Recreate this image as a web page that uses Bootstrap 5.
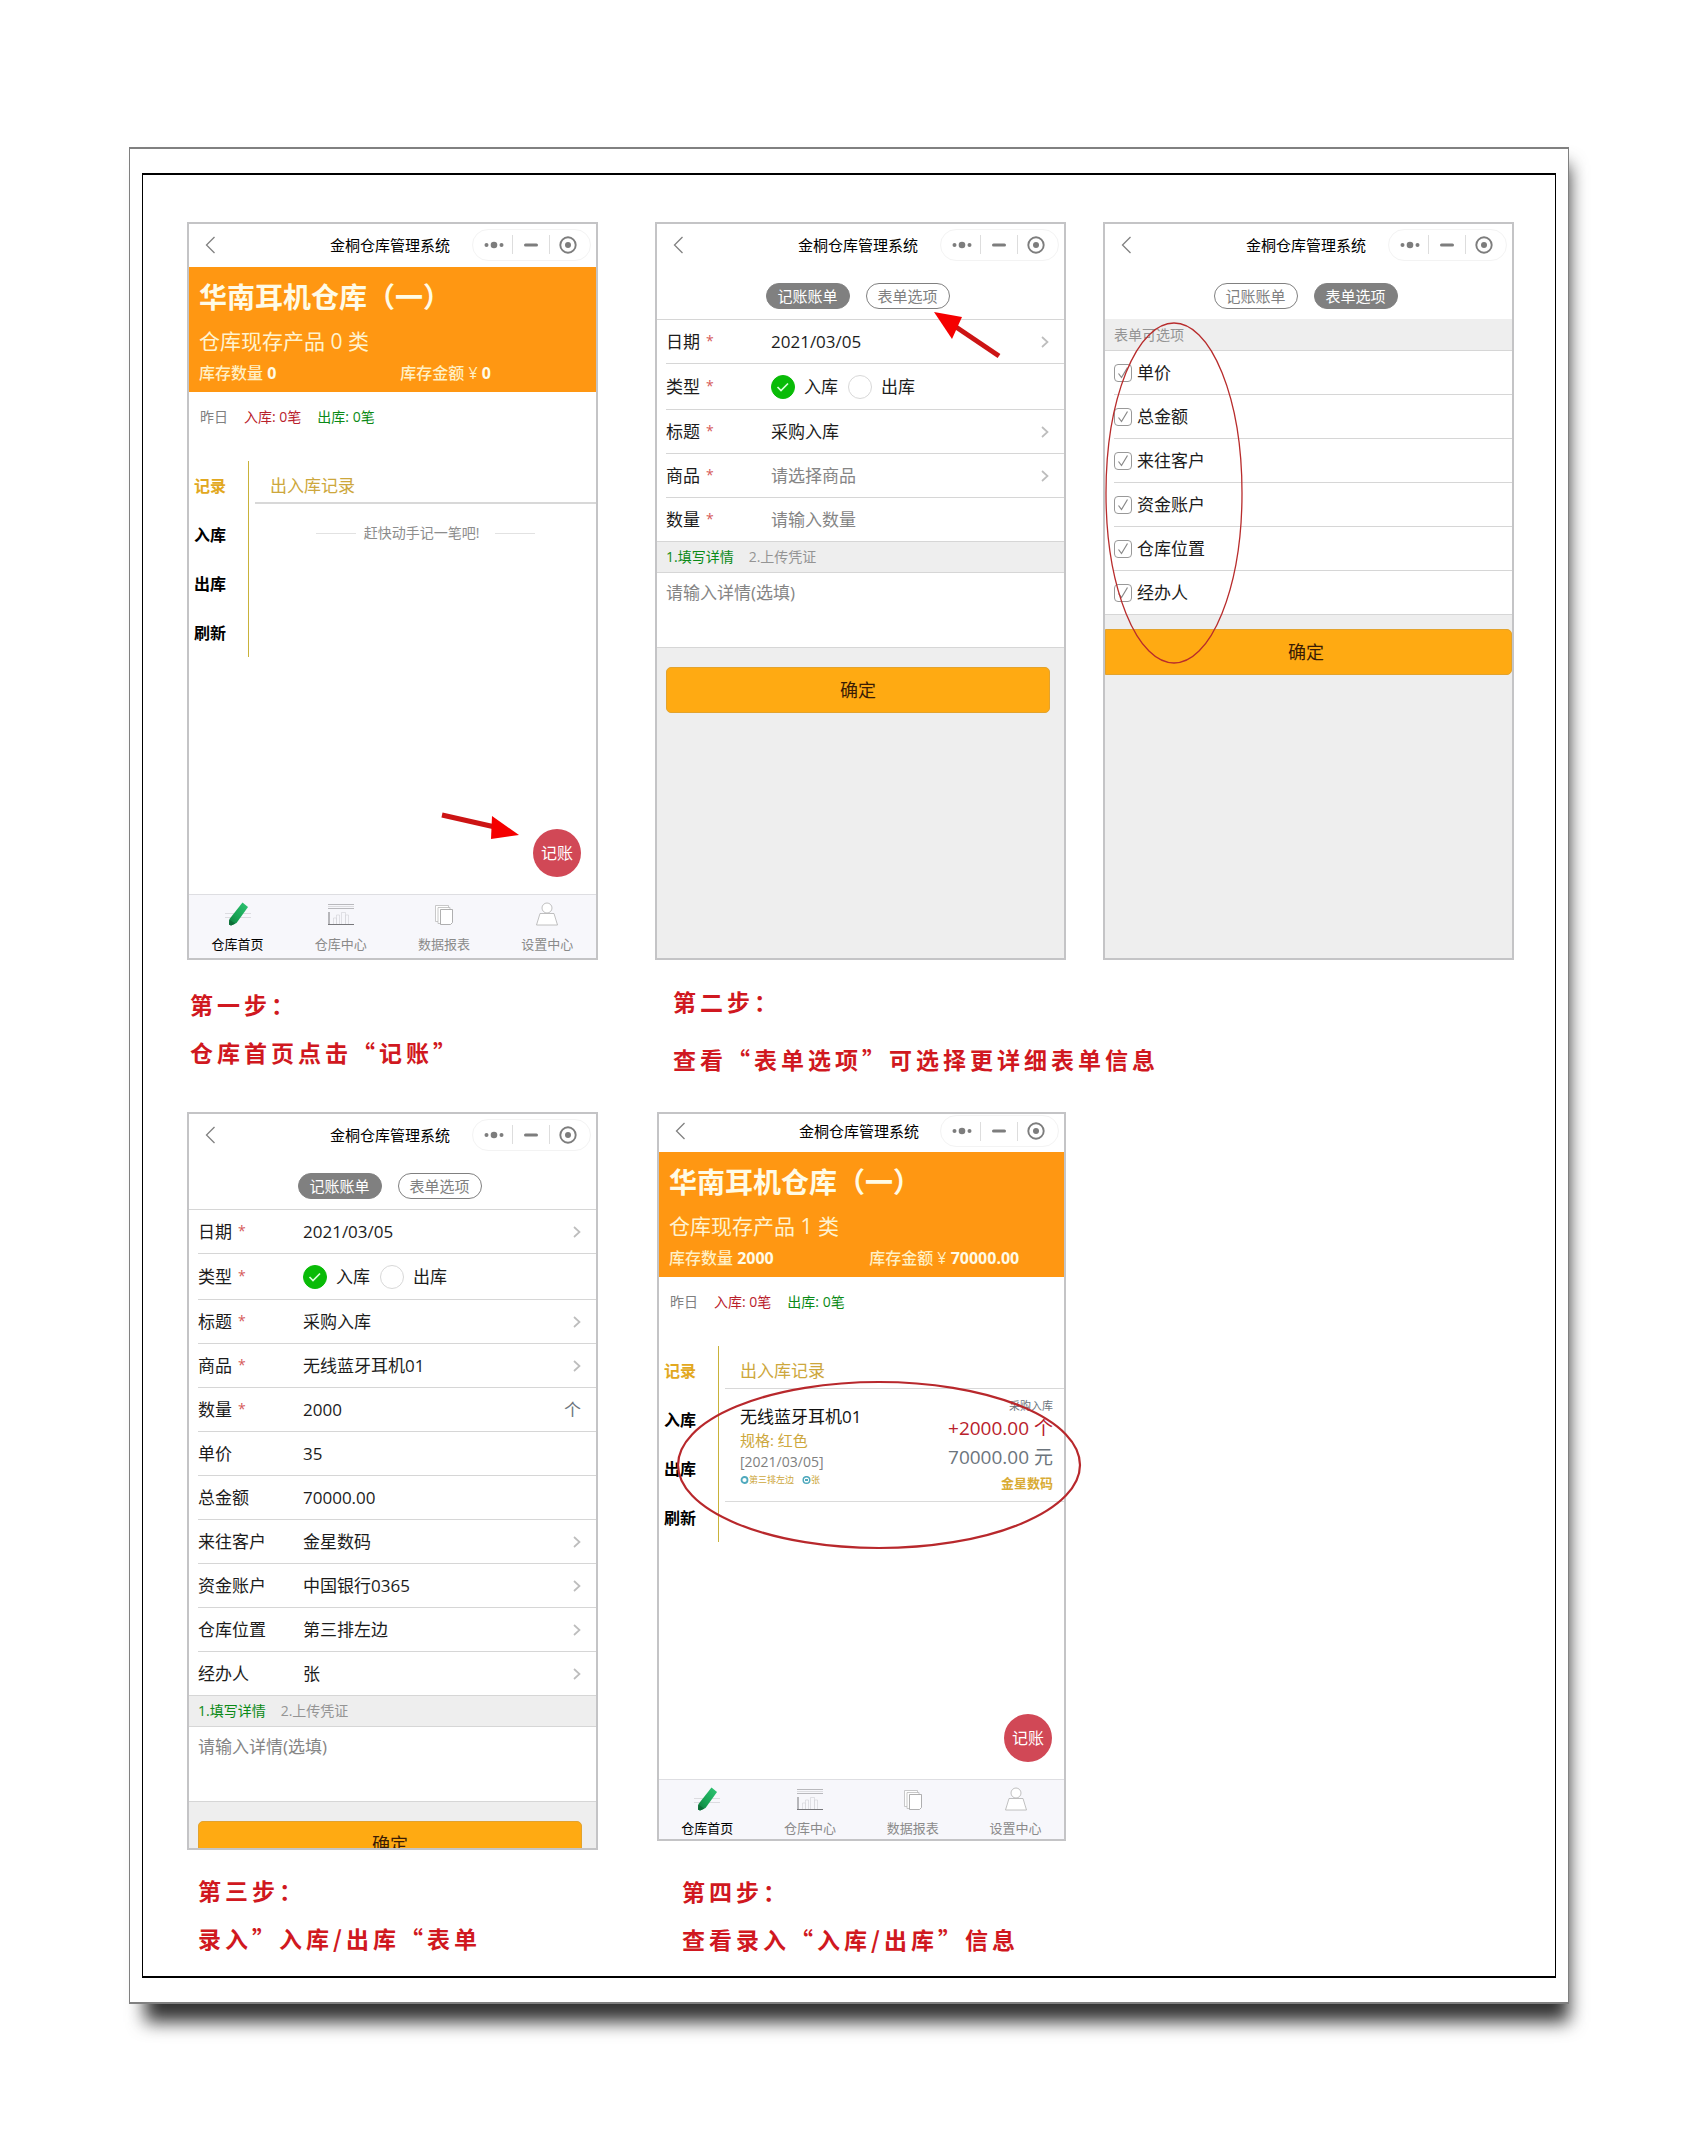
<!DOCTYPE html>
<html lang="zh-CN">
<head>
<meta charset="utf-8">
<meta name="viewport" content="width=device-width, initial-scale=1">
<title>金桐仓库管理系统</title>
<link href="https://cdn.jsdelivr.net/npm/bootstrap@5.3.0/dist/css/bootstrap.min.css" rel="stylesheet">
<style>
  body { font-family: "Open Sans", "Noto Sans CJK SC", sans-serif; font-size: 17px; line-height: 24px; color: #1c1c1c; background: #fff; padding: 147px 129px; }
  button, input, select, textarea { font: inherit; color: inherit; }

  /* paper sheet with its soft shadow */
  .paper { position: relative; isolation: isolate; }
  .paper::before { content: ""; position: absolute; z-index: -1; top: 18px; left: 16px; right: 0; bottom: -18px; background: #333; filter: blur(9px); }
  .sheet { background: #fff; border: 1px solid #808080; border-width: 2px 1px; padding: 24px 12px; }
  .sheet-inner { border: 1px solid #000; border-width: 2px 1px; padding: 47px 41px 12px 44px; }

  /* steps */
  .grow-1 { flex: 411 1 0; min-width: 0; }
  .grow-2 { flex: 859 1 0; min-width: 0; }
  .grow-4 { flex: 409 1 0; min-width: 0; margin-left: 59px; }
  .grow-rest { flex: 448 1 0; min-width: 0; }
  .gap-a { gap: 57px; }
  .gap-b { gap: 37px; }
  .note { font-family: "Noto Sans CJK SC", sans-serif; font-weight: 700; font-size: 23px; line-height: 48px; letter-spacing: 4px; color: #d01820; white-space: nowrap; }
  .note-tall { line-height: 58px; }
  .note p { margin: 0; }
  .note-1 { padding: 20px 0 36px 3px; }
  .note-2 { padding: 12px 0 24px 18px; }
  .note-3 { padding: 16px 0 1px 11px; }
  .note-4 { padding: 26px 0 1px 25px; }

  /* phone */
  .phone { position: relative; aspect-ratio: 411 / 738; border: 2px solid #c4c4c6; background: #fff; display: flex; flex-direction: column; }
  .phone-short { aspect-ratio: 409 / 729; }
  .phone-grey { background: #eee; }
  .clipped { overflow: hidden; min-height: 0; }
  .clipped > * { flex-shrink: 0; }
  .top-nav { display: grid; grid-template-columns: 1fr auto 1fr; align-items: center; height: 43px; padding: 0 5px 2px 0; background: #fff; }
  .phone-short .top-nav { height: 38px; padding-bottom: 4px; }
  .top-nav h2 { font-size: 15px; line-height: 20px; margin: 0; font-weight: 400; color: #000; }
  .plain { background: none; border: 0; padding: 0; }
  .back { margin-left: 16px; display: flex; }
  .capsule { justify-self: end; display: flex; align-items: center; height: 32px; padding: 0 4px 0 2px; border: 1px solid #f3f3f3; border-radius: 16px; }
  .capsule button { width: 37px; height: 19px; display: flex; align-items: center; justify-content: center; }
  .capsule button + button { border-left: 1px solid #ddd; }

  /* home screens */
  .hero { background: #ff9712; color: #fff0c4; height: 125px; padding: 10px 10px 0; }
  .hero h3 { font-size: 28px; line-height: 40px; font-weight: 700; color: #fffbe6; margin: 0; }
  .hero-kind { font-size: 21px; line-height: 48px; color: #fff3cf; }
  .hero-sum { font-size: 16px; line-height: 17px; font-weight: 500; display: flex; }
  .hero-sum > span { flex: 1; white-space: nowrap; }
  .hero-sum > span:first-child { flex: 0 0 52%; }
  .hero-sum b { color: #fffbe6; }
  .day { font-size: 14px; line-height: 50px; padding-left: 11px; color: #808080; display: flex; gap: 16px; }
  .c-red { color: #b9212c; }
  .c-green { color: #0b8a16; }
  .c-gold { color: #cda73c; }
  .home-body { display: flex; margin-top: 19px; }
  .side { width: 60px; flex: none; border-right: 1px solid #c9b23a; }
  .side a { display: block; height: 49px; line-height: 50px; padding-left: 5px; font-size: 16px; font-weight: 700; color: #000; text-decoration: none; }
  .side a.on { color: #e2a820; }
  .records { flex: 1; min-width: 0; margin-left: 6px; }
  .records h4 { font-size: 17px; line-height: 50px; height: 43px; margin: 0; padding-left: 15px; font-weight: 400; color: #cda73c; border-bottom: 2px solid #d8d8d8; }
  .records.thin h4 { border-bottom-width: 1px; }
  .empty-tip { display: flex; justify-content: center; align-items: center; font-size: 14px; line-height: 20px; color: #8c8c8c; padding: 19px 0 0; }
  .empty-tip::before, .empty-tip::after { content: ""; width: 40px; border-top: 1px solid #e2e2e2; }
  .empty-tip::before { margin-right: 8px; }
  .empty-tip::after { margin-left: 16px; }
  .entry { display: flex; justify-content: space-between; padding: 9px 11px 0 15px; height: 113px; border-bottom: 1px solid #dadada; }
  .entry-l { padding-top: 6px; }
  .t17 { font-size: 17px; line-height: 26px; color: #111; }
  .t15 { font-size: 15px; line-height: 21px; }
  .t14 { font-size: 14px; line-height: 21px; color: #808080; }
  .t11 { font-size: 11px; line-height: 16px; }
  .t9 { font-size: 9px; line-height: 16px; }
  .t19 { font-size: 19px; line-height: 29px; }
  .t13 { font-size: 13px; line-height: 22px; font-weight: 700; color: #d9ab35; }
  .fab { position: absolute; right: 15px; bottom: 81px; width: 48px; height: 48px; border: 0; border-radius: 50%; background: #d14856; color: #fff; font-size: 16px; padding: 0; }
  .phone-short .fab { right: 12px; bottom: 77px; }
  .tabbar { display: flex; margin-top: auto; height: 64px; background: #f7f7fb; border-top: 1px solid #dedee2; }
  .phone-short .tabbar { height: 60px; }
  .tabbar a { flex: 1; display: flex; flex-direction: column; align-items: center; padding-top: 6px; font-size: 13px; line-height: 20px; color: #8a8a8a; text-decoration: none; }
  .tabbar a:first-child { margin-left: -3px; }
  .tabbar a:last-child { margin-right: -3px; }
  .tabbar a.on { color: #000; }
  .tabbar svg { margin-bottom: 7px; }
  .phone-short .tabbar svg { margin-bottom: 6px; }

  /* form screens */
  .pills { display: flex; justify-content: center; gap: 16px; padding: 16px 6px 10px 0; background: #fff; }
  .pills button { width: 84px; height: 26px; border: 1px solid #808080; border-radius: 13px; background: #fff; color: #808080; font-size: 15px; line-height: 22px; padding: 0; }
  .pills button.on { background: #808080; color: #fff; }
  .rows { background: #fff; border-top: 1px solid #d6d6d6; border-bottom: 1px solid #d6d6d6; padding-left: 9px; }
  .line { display: flex; align-items: center; height: 44px; border-bottom: 1px solid #d6d6d6; padding-right: 15px; }
  .line-radio { height: 46px; }
  .line:last-child { border-bottom: 0; height: 43px; }
  .line > label, .line > .lbl { width: 105px; flex: none; }
  .star { color: #d65a5a; margin-left: 6px; font-size: 14px; vertical-align: 2px; }
  .line > input, .line > select { flex: 1; min-width: 0; border: 0; padding: 0; background: none; appearance: none; height: 30px; outline: 0; }
  .line > select:invalid, ::placeholder { color: #858585 !important; opacity: 1; }
  .line > label.pick { display: flex; align-items: center; gap: 9px; width: auto; margin-right: 10px; }
  .pick input { appearance: none; width: 24px; height: 24px; margin: 0; border: 1px solid #d8d8d8; border-radius: 50%; background: #fff; }
  .pick input:checked { border-color: #09bb07; background: #09bb07 url("data:image/svg+xml,%3Csvg xmlns='http://www.w3.org/2000/svg' viewBox='0 0 24 24'%3E%3Cpath d='M6.500 12l3.500 3.500 7-7' fill='none' stroke='%23d8ffd8' stroke-width='1.700'/%3E%3C/svg%3E") center / 24px; }
  .strip { background: #eee; font-size: 14px; line-height: 20px; height: 30px; display: flex; align-items: center; gap: 15px; padding-left: 9px; color: #949494; }
  .strip-top { height: 31px; }
  .detail { display: block; width: 100%; height: 76px; padding: 8px 9px; border: 1px solid #d6d6d6; border-width: 1px 0; resize: none; background: #fff; outline: 0; }
  .ok { display: block; height: 46px; margin: 19px 14px 0 9px; border: 1px solid #e3a32d; border-radius: 5px; background: #ffaa12; color: #3a1c05; font-size: 18px; padding: 0; }
  .ok-wide { margin: 14px 0 0; border-radius: 0 5px 5px 0; padding-right: 5px; }
  .tick { width: 18px; height: 18px; flex: none !important; border: 1px solid #999 !important; border-radius: 4px; margin: 0; }
  .line > input.tick { height: 18px; }
  .tick:checked { background: url("data:image/svg+xml,%3Csvg xmlns='http://www.w3.org/2000/svg' viewBox='0 0 16 16'%3E%3Cpath d='M3.500 8.500l3 4 6-10' fill='none' stroke='%23888' stroke-width='1.200'/%3E%3C/svg%3E") center / 16px no-repeat !important; }
  .line > .tick + label { width: auto; margin-left: 5px; }

  /* red marks drawn over the screens */
  .over { position: absolute; pointer-events: none; overflow: visible; }
  .over-1 { right: 77px; bottom: 117px; }
  .over-2 { right: 62px; top: 86px; }
  .over-3 { left: 0; top: 98px; }
  .over-4 { left: 17px; top: 266px; }
</style>
</head>
<body>
<svg width="0" height="0" class="position-absolute" aria-hidden="true">
  <defs>
    <linearGradient id="pen" x1="1" y1="0" x2="0" y2="1"><stop offset="0" stop-color="#2fc573"/><stop offset=".6" stop-color="#17a354"/><stop offset="1" stop-color="#0c7a3b"/></linearGradient>
    <symbol id="i-back" viewBox="0 0 10 18"><path d="M9.500 1L1.500 9l8 8" fill="none" stroke="#808080" stroke-width="1.300"/></symbol>
    <symbol id="i-dots" viewBox="0 0 20 8"><circle cx="2.500" cy="4" r="2" fill="#7d7d7d"/><circle cx="10" cy="4" r="3.300" fill="#7d7d7d"/><circle cx="17.500" cy="4" r="2" fill="#7d7d7d"/></symbol>
    <symbol id="i-min" viewBox="0 0 14 4"><rect y=".5" width="14" height="3" rx="1.500" fill="#7d7d7d"/></symbol>
    <symbol id="i-aim" viewBox="0 0 18 18"><circle cx="9" cy="9" r="7.700" fill="none" stroke="#7d7d7d" stroke-width="1.900"/><circle cx="9" cy="9" r="3" fill="#7d7d7d"/></symbol>
    <symbol id="i-next" viewBox="0 0 8 12"><path d="M1 1l5.500 5L1 11" fill="none" stroke="#bdbdbd" stroke-width="1.700"/></symbol>
    <symbol id="i-pen" viewBox="0 0 26 26"><path d="M0 12.500h26M0 16.500h26" stroke="#dcdce0" stroke-width="1"/><path d="M17.500 1.500l5.500 4.500-11.500 16-5.500 2.500-2-1 .5-5.500z" fill="url(#pen)"/><path d="M4.300 18.500l6 4.200-4.300 1.800-2-1z" fill="#0d6e38"/></symbol>
    <symbol id="i-chart" viewBox="0 0 26 26"><path d="M0 3.500h26M0 7.500h26" stroke="#b9b9bd"/><path d="M0 5.500h26" stroke="#dddde0"/><path d="M1 11v13" stroke="#77777b"/><path d="M0 23.500h26" stroke="#77777b"/><path d="M5.500 23v-6h3v6M8.500 23V14h3v9M13.500 23V11.500h4V23M17.500 23v-9h3v9" fill="none" stroke="#d6d6db" stroke-width=".7"/></symbol>
    <symbol id="i-docs" viewBox="0 0 26 26"><path d="M4.500 4.500h13v16h-13z" fill="#fff" stroke="#bbb" stroke-width=".8"/><path d="M7 6.500h12v16H7z" fill="#fff" stroke="#bbb" stroke-width=".8"/><path d="M9.500 8.500h12v13l-2 2h-10z" fill="#fff" stroke="#9c9c9c" stroke-width=".8"/></symbol>
    <symbol id="i-user" viewBox="0 0 26 26"><circle cx="13" cy="7" r="5" fill="#fff" stroke="#b0b0b0" stroke-width=".8"/><path d="M6 12.500h14l3.500 11.500h-21z" fill="#fff" stroke="#b0b0b0" stroke-width=".8"/></symbol>
  </defs>
</svg>

<main class="paper">
 <div class="sheet">
  <div class="sheet-inner">

   <div class="d-flex gap-a">
    <!-- step 1 -->
    <section class="grow-1">
     <div class="phone">
      <header class="top-nav">
       <button class="plain back" aria-label="返回"><svg width="10" height="18"><use href="#i-back"/></svg></button>
       <h2>金桐仓库管理系统</h2>
       <div class="capsule"><button class="plain" aria-label="更多"><svg width="20" height="8"><use href="#i-dots"/></svg></button><button class="plain" aria-label="最小化"><svg width="14" height="4"><use href="#i-min"/></svg></button><button class="plain" aria-label="关闭"><svg width="18" height="18"><use href="#i-aim"/></svg></button></div>
      </header>
      <div class="hero">
       <h3>华南耳机仓库（一）</h3>
       <div class="hero-kind">仓库现存产品 0 类</div>
       <div class="hero-sum"><span>库存数量 <b>0</b></span><span>库存金额 ¥ <b>0</b></span></div>
      </div>
      <div class="day"><span>昨日</span><span class="c-red">入库: 0笔</span><span class="c-green">出库: 0笔</span></div>
      <div class="home-body">
       <nav class="side"><a href="#" class="on">记录</a><a href="#">入库</a><a href="#">出库</a><a href="#">刷新</a></nav>
       <div class="records"><h4>出入库记录</h4><div class="empty-tip">赶快动手记一笔吧!</div></div>
      </div>
      <button class="fab">记账</button>
      <nav class="tabbar">
       <a href="#" class="on"><svg width="26" height="26"><use href="#i-pen"/></svg>仓库首页</a>
       <a href="#"><svg width="26" height="26"><use href="#i-chart"/></svg>仓库中心</a>
       <a href="#"><svg width="26" height="26"><use href="#i-docs"/></svg>数据报表</a>
       <a href="#"><svg width="26" height="26"><use href="#i-user"/></svg>设置中心</a>
      </nav>
      <svg class="over over-1" width="78" height="30" aria-hidden="true"><path d="M1 4L54 16" stroke="#cc1414" stroke-width="5"/><path d="M51 5l27 19-28 4z" fill="#f50000"/></svg>
     </div>
     <div class="note note-1"><p>第一步：</p><p>仓库首页点击“记账”</p></div>
    </section>

    <!-- step 2 -->
    <section class="grow-2">
     <div class="d-flex gap-b">
      <form class="phone phone-grey grow-1">
       <header class="top-nav">
        <button type="button" class="plain back" aria-label="返回"><svg width="10" height="18"><use href="#i-back"/></svg></button>
        <h2>金桐仓库管理系统</h2>
        <div class="capsule"><button type="button" class="plain" aria-label="更多"><svg width="20" height="8"><use href="#i-dots"/></svg></button><button type="button" class="plain" aria-label="最小化"><svg width="14" height="4"><use href="#i-min"/></svg></button><button type="button" class="plain" aria-label="关闭"><svg width="18" height="18"><use href="#i-aim"/></svg></button></div>
       </header>
       <div class="pills"><button type="button" class="on">记账账单</button><button type="button">表单选项</button></div>
       <div class="rows">
        <div class="line"><label for="a-date">日期<span class="star">*</span></label><input id="a-date" type="text" value="2021/03/05"><svg width="8" height="12"><use href="#i-next"/></svg></div>
        <div class="line line-radio"><span class="lbl">类型<span class="star">*</span></span><label class="pick"><input type="radio" name="a-type" checked>入库</label><label class="pick"><input type="radio" name="a-type">出库</label></div>
        <div class="line"><label for="a-title">标题<span class="star">*</span></label><select id="a-title"><option>采购入库</option></select><svg width="8" height="12"><use href="#i-next"/></svg></div>
        <div class="line"><label for="a-goods">商品<span class="star">*</span></label><select id="a-goods" required><option value="">请选择商品</option></select><svg width="8" height="12"><use href="#i-next"/></svg></div>
        <div class="line"><label for="a-num">数量<span class="star">*</span></label><input id="a-num" type="text" placeholder="请输入数量"></div>
       </div>
       <div class="strip"><button type="button" class="plain c-green">1.填写详情</button><button type="button" class="plain">2.上传凭证</button></div>
       <textarea class="detail" aria-label="详情" placeholder="请输入详情(选填)"></textarea>
       <button type="button" class="ok">确定</button>
       <svg class="over over-2" width="68" height="48" aria-hidden="true"><path d="M65 46L22 17" stroke="#cc1414" stroke-width="5"/><path d="M0 2l28 5-10 22z" fill="#f50000"/></svg>
      </form>

      <form class="phone phone-grey grow-1">
       <header class="top-nav">
        <button type="button" class="plain back" aria-label="返回"><svg width="10" height="18"><use href="#i-back"/></svg></button>
        <h2>金桐仓库管理系统</h2>
        <div class="capsule"><button type="button" class="plain" aria-label="更多"><svg width="20" height="8"><use href="#i-dots"/></svg></button><button type="button" class="plain" aria-label="最小化"><svg width="14" height="4"><use href="#i-min"/></svg></button><button type="button" class="plain" aria-label="关闭"><svg width="18" height="18"><use href="#i-aim"/></svg></button></div>
       </header>
       <div class="pills"><button type="button">记账账单</button><button type="button" class="on">表单选项</button></div>
       <div class="strip strip-top">表单可选项</div>
       <div class="rows">
        <div class="line"><input class="tick" type="checkbox" id="o1" checked><label for="o1">单价</label></div>
        <div class="line"><input class="tick" type="checkbox" id="o2" checked><label for="o2">总金额</label></div>
        <div class="line"><input class="tick" type="checkbox" id="o3" checked><label for="o3">来往客户</label></div>
        <div class="line"><input class="tick" type="checkbox" id="o4" checked><label for="o4">资金账户</label></div>
        <div class="line"><input class="tick" type="checkbox" id="o5" checked><label for="o5">仓库位置</label></div>
        <div class="line"><input class="tick" type="checkbox" id="o6" checked><label for="o6">经办人</label></div>
       </div>
       <button type="button" class="ok ok-wide">确定</button>
       <svg class="over over-3" width="139" height="342" aria-hidden="true"><ellipse cx="69" cy="171" rx="68" ry="170" fill="none" stroke="#b82c2c" stroke-width="1.300"/></svg>
      </form>
     </div>
     <div class="note note-tall note-2"><p>第二步：</p><p>查看“表单选项”可选择更详细表单信息</p></div>
    </section>
   </div>

   <div class="d-flex">
    <!-- step 3 -->
    <section class="grow-1">
     <form class="phone phone-grey clipped">
      <header class="top-nav">
       <button type="button" class="plain back" aria-label="返回"><svg width="10" height="18"><use href="#i-back"/></svg></button>
       <h2>金桐仓库管理系统</h2>
       <div class="capsule"><button type="button" class="plain" aria-label="更多"><svg width="20" height="8"><use href="#i-dots"/></svg></button><button type="button" class="plain" aria-label="最小化"><svg width="14" height="4"><use href="#i-min"/></svg></button><button type="button" class="plain" aria-label="关闭"><svg width="18" height="18"><use href="#i-aim"/></svg></button></div>
      </header>
      <div class="pills"><button type="button" class="on">记账账单</button><button type="button">表单选项</button></div>
      <div class="rows">
       <div class="line"><label for="b-date">日期<span class="star">*</span></label><input id="b-date" type="text" value="2021/03/05"><svg width="8" height="12"><use href="#i-next"/></svg></div>
       <div class="line line-radio"><span class="lbl">类型<span class="star">*</span></span><label class="pick"><input type="radio" name="b-type" checked>入库</label><label class="pick"><input type="radio" name="b-type">出库</label></div>
       <div class="line"><label for="b-title">标题<span class="star">*</span></label><select id="b-title"><option>采购入库</option></select><svg width="8" height="12"><use href="#i-next"/></svg></div>
       <div class="line"><label for="b-goods">商品<span class="star">*</span></label><select id="b-goods"><option>无线蓝牙耳机01</option></select><svg width="8" height="12"><use href="#i-next"/></svg></div>
       <div class="line"><label for="b-num">数量<span class="star">*</span></label><input id="b-num" type="text" value="2000"><span class="text-secondary">个</span></div>
       <div class="line"><label for="b-price">单价</label><input id="b-price" type="text" value="35"></div>
       <div class="line"><label for="b-sum">总金额</label><input id="b-sum" type="text" value="70000.00"></div>
       <div class="line"><label for="b-cust">来往客户</label><select id="b-cust"><option>金星数码</option></select><svg width="8" height="12"><use href="#i-next"/></svg></div>
       <div class="line"><label for="b-acct">资金账户</label><select id="b-acct"><option>中国银行0365</option></select><svg width="8" height="12"><use href="#i-next"/></svg></div>
       <div class="line"><label for="b-pos">仓库位置</label><select id="b-pos"><option>第三排左边</option></select><svg width="8" height="12"><use href="#i-next"/></svg></div>
       <div class="line"><label for="b-man">经办人</label><select id="b-man"><option>张</option></select><svg width="8" height="12"><use href="#i-next"/></svg></div>
      </div>
      <div class="strip"><button type="button" class="plain c-green">1.填写详情</button><button type="button" class="plain">2.上传凭证</button></div>
      <textarea class="detail" aria-label="详情" placeholder="请输入详情(选填)"></textarea>
      <button type="button" class="ok">确定</button>
     </form>
     <div class="note note-3"><p>第三步：</p><p>录入”入库/出库“表单</p></div>
    </section>

    <!-- step 4 -->
    <section class="grow-4">
     <div class="phone phone-short">
      <header class="top-nav">
       <button class="plain back" aria-label="返回"><svg width="10" height="18"><use href="#i-back"/></svg></button>
       <h2>金桐仓库管理系统</h2>
       <div class="capsule"><button class="plain" aria-label="更多"><svg width="20" height="8"><use href="#i-dots"/></svg></button><button class="plain" aria-label="最小化"><svg width="14" height="4"><use href="#i-min"/></svg></button><button class="plain" aria-label="关闭"><svg width="18" height="18"><use href="#i-aim"/></svg></button></div>
      </header>
      <div class="hero">
       <h3>华南耳机仓库（一）</h3>
       <div class="hero-kind">仓库现存产品 1 类</div>
       <div class="hero-sum"><span>库存数量 <b>2000</b></span><span>库存金额 ¥ <b>70000.00</b></span></div>
      </div>
      <div class="day"><span>昨日</span><span class="c-red">入库: 0笔</span><span class="c-green">出库: 0笔</span></div>
      <div class="home-body">
       <nav class="side"><a href="#" class="on">记录</a><a href="#">入库</a><a href="#">出库</a><a href="#">刷新</a></nav>
       <div class="records thin"><h4>出入库记录</h4>
        <article class="entry">
         <div class="entry-l">
          <div class="t17">无线蓝牙耳机01</div>
          <div class="t15 c-gold">规格: 红色</div>
          <div class="t14">[2021/03/05]</div>
          <div class="t9 c-gold d-flex align-items-center"><svg width="9" height="9" viewBox="0 0 9 9"><circle cx="4.500" cy="4" r="3" fill="none" stroke="#4fa9bd" stroke-width="1.800"/></svg>第三排左边<svg class="ms-2" width="9" height="9" viewBox="0 0 9 9"><circle cx="4.500" cy="4" r="3.300" fill="none" stroke="#4fa9bd" stroke-width="1.500"/><path d="M3 3h3v2H3z" fill="#4fa9bd"/></svg>张</div>
         </div>
         <div class="text-end">
          <div class="t11 text-secondary">采购入库</div>
          <div class="t19 c-red">+2000.00 个</div>
          <div class="t19 text-secondary">70000.00 元</div>
          <div class="t13">金星数码</div>
         </div>
        </article>
       </div>
      </div>
      <button class="fab">记账</button>
      <nav class="tabbar">
       <a href="#" class="on"><svg width="26" height="26"><use href="#i-pen"/></svg>仓库首页</a>
       <a href="#"><svg width="26" height="26"><use href="#i-chart"/></svg>仓库中心</a>
       <a href="#"><svg width="26" height="26"><use href="#i-docs"/></svg>数据报表</a>
       <a href="#"><svg width="26" height="26"><use href="#i-user"/></svg>设置中心</a>
      </nav>
      <svg class="over over-4" width="406" height="170" aria-hidden="true"><ellipse cx="203" cy="85" rx="201" ry="83" fill="none" stroke="#b8282c" stroke-width="2.200"/></svg>
     </div>
     <div class="note note-4"><p>第四步：</p><p>查看录入“入库/出库”信息</p></div>
    </section>
    <div class="grow-rest"></div>
   </div>

  </div>
 </div>
</main>
<script src="https://cdn.jsdelivr.net/npm/bootstrap@5.3.0/dist/js/bootstrap.bundle.min.js"></script>
</body>
</html>
